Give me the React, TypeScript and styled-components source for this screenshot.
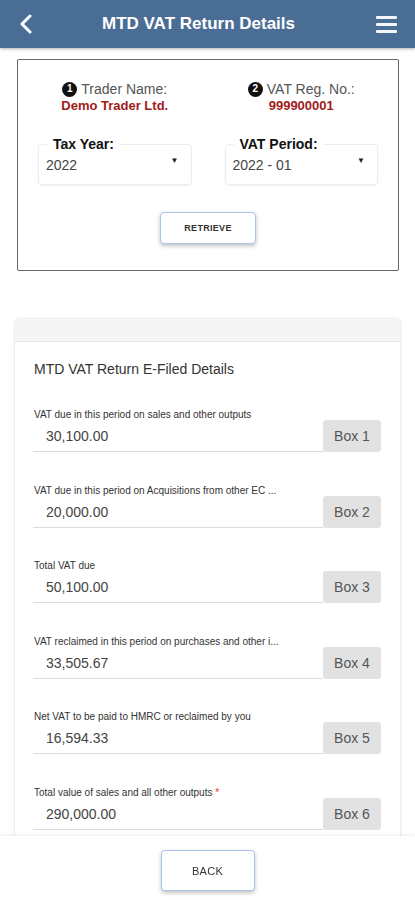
import React from 'react';
import styled, { createGlobalStyle } from 'styled-components';

const GlobalStyle = createGlobalStyle`
  body {
    margin: 0;
    background: #ffffff;
    font-family: "Liberation Sans", Arial, sans-serif;
    color: #333;
  }
`;

const Page = styled.div`
  min-height: 100vh;
`;

const Header = styled.header`
  height: 48px;
  background: #4a6d95;
  display: grid;
  grid-template-columns: 52px 1fr 57px;
  align-items: center;
  color: #fff;
  box-shadow: 0 1px 3px rgba(0, 0, 0, 0.3);
`;

const Title = styled.h1`
  margin: 0;
  padding-right: 13px;
  text-align: center;
  font-size: 17px;
  font-weight: 700;
`;

const IconBtn = styled.div`
  display: flex;
  align-items: center;
  justify-content: center;
  height: 48px;
`;

const SearchCard = styled.section`
  margin: 11px 16px 0 17px;
  border: 1px solid #666;
  border-radius: 2px;
  padding: 21px 0 26px;
`;

const Grid = styled.div`
  display: grid;
  grid-template-columns: 1fr 1fr;
  column-gap: 33px;
  padding: 0 20px;
`;

const Info = styled.div`
  text-align: center;
`;

const InfoLabel = styled.div`
  display: flex;
  align-items: center;
  justify-content: center;
  gap: 4px;
  font-size: 14px;
  color: #555;
  line-height: 16px;
`;

const Badge = styled.span`
  width: 15px;
  height: 15px;
  border-radius: 50%;
  background: #111;
  color: #fff;
  font-size: 10px;
  font-weight: 700;
  display: inline-flex;
  align-items: center;
  justify-content: center;
`;

const InfoValue = styled.div`
  font-size: 13px;
  font-weight: 700;
  color: #a21b1b;
  line-height: 17px;
`;

const SelectBox = styled.div`
  position: relative;
  margin-top: 30px;
  height: 41px;
  border: 1px solid #ececec;
  border-radius: 4px;
  box-shadow: 0 1px 2px rgba(0, 0, 0, 0.06);
  display: flex;
  align-items: center;
  justify-content: space-between;
  padding: 0 12px 0 7px;
  box-sizing: border-box;
  font-size: 14px;
  color: #444;
`;

const Legend = styled.span`
  position: absolute;
  top: -9px;
  left: 8px;
  padding: 0 6px;
  background: #fff;
  font-size: 14px;
  font-weight: 700;
  color: #111;
  line-height: 16px;
`;

const Caret = styled.span`
  font-size: 8px;
  color: #222;
  margin-top: -9px;
`;

const Actions = styled.div`
  display: flex;
  justify-content: center;
  margin-top: 27px;
`;

const OutlineButton = styled.button<{ $w: number; $h: number; $size: number; $bold?: boolean }>`
  width: ${(p) => p.$w}px;
  height: ${(p) => p.$h}px;
  background: #fff;
  border: 1px solid #a9c5ea;
  border-radius: 4px;
  box-shadow: 0 2px 4px rgba(0, 0, 0, 0.25);
  font-family: "Liberation Sans", Arial, sans-serif;
  font-size: ${(p) => p.$size}px;
  font-weight: ${(p) => (p.$bold ? 700 : 400)};
  color: #333;
  letter-spacing: 0.3px;
  padding: 0;
`;

const ReturnCard = styled.section`
  margin: 48px 15px 0 15px;
  border-radius: 4px;
  box-shadow: 0 0 3px rgba(0, 0, 0, 0.18);
  background: #fff;
  overflow: hidden;
`;

const CardTop = styled.div`
  height: 22px;
  background: #f5f5f5;
  border-bottom: 1px solid #e6e6e6;
`;

const CardBody = styled.div`
  padding: 19px 19px 30px 18px;
`;

const CardTitle = styled.h2`
  margin: 0 0 32px 1px;
  font-size: 14px;
  font-weight: 400;
  line-height: 16px;
  color: #333;
`;

const Rows = styled.div`
  display: flex;
  flex-direction: column;
  gap: 32.6px;
`;

const FieldLabel = styled.div`
  font-size: 10px;
  line-height: 12px;
  color: #333;
  padding-left: 1px;
  white-space: nowrap;
`;

const Required = styled.span`
  color: #d33;
`;

const FieldRow = styled.div`
  display: flex;
  margin-top: -1px;
  height: 32px;
`;

const Value = styled.div`
  flex: 1;
  border-bottom: 1px solid #dcdcdc;
  font-size: 14px;
  line-height: 32px;
  padding-left: 13px;
  color: #444;
`;

const BoxTag = styled.div`
  width: 58px;
  background: #e2e2e2;
  border-radius: 3px;
  font-size: 14px;
  color: #555;
  display: flex;
  align-items: center;
  justify-content: center;
`;

const Footer = styled.footer`
  position: fixed;
  left: 0;
  right: 0;
  bottom: 0;
  height: 64px;
  background: #fff;
  box-shadow: 0 -1px 3px rgba(0, 0, 0, 0.08);
  display: flex;
  justify-content: center;
  padding-top: 14px;
  box-sizing: border-box;
`;

const rows = [
  { label: 'VAT due in this period on sales and other outputs', value: '30,100.00' },
  { label: 'VAT due in this period on Acquisitions from other EC ...', value: '20,000.00' },
  { label: 'Total VAT due', value: '50,100.00' },
  { label: 'VAT reclaimed in this period on purchases and other i...', value: '33,505.67' },
  { label: 'Net VAT to be paid to HMRC or reclaimed by you', value: '16,594.33' },
  { label: 'Total value of sales and all other outputs', value: '290,000.00', required: true },
];

export default function App() {
  return (
    <Page>
      <GlobalStyle />
      <Header>
        <IconBtn>
          <svg width="14" height="20" viewBox="0 0 14 20">
            <polyline points="11,2 3,10 11,18" fill="none" stroke="#fff" strokeWidth="3" strokeLinecap="round" strokeLinejoin="round" />
          </svg>
        </IconBtn>
        <Title>MTD VAT Return Details</Title>
        <IconBtn>
          <svg width="21" height="19" viewBox="0 0 21 19">
            <rect x="0" y="1" width="21" height="3" rx="1" fill="#f2f5f9" />
            <rect x="0" y="8" width="21" height="3" rx="1" fill="#f2f5f9" />
            <rect x="0" y="15" width="21" height="3" rx="1" fill="#f2f5f9" />
          </svg>
        </IconBtn>
      </Header>

      <SearchCard>
        <Grid>
          <Info>
            <InfoLabel><Badge>1</Badge>Trader Name:</InfoLabel>
            <InfoValue>Demo Trader Ltd.</InfoValue>
          </Info>
          <Info>
            <InfoLabel><Badge>2</Badge>VAT Reg. No.:</InfoLabel>
            <InfoValue>999900001</InfoValue>
          </Info>
          <SelectBox>
            <Legend>Tax Year:</Legend>
            <span>2022</span>
            <Caret>▼</Caret>
          </SelectBox>
          <SelectBox>
            <Legend>VAT Period:</Legend>
            <span>2022 - 01</span>
            <Caret>▼</Caret>
          </SelectBox>
        </Grid>
        <Actions>
          <OutlineButton $w={96} $h={32} $size={9} $bold>RETRIEVE</OutlineButton>
        </Actions>
      </SearchCard>

      <ReturnCard>
        <CardTop />
        <CardBody>
          <CardTitle>MTD VAT Return E-Filed Details</CardTitle>
          <Rows>
            {rows.map((r, i) => (
              <div key={i}>
                <FieldLabel>
                  {r.label}
                  {r.required && <Required> *</Required>}
                </FieldLabel>
                <FieldRow>
                  <Value>{r.value}</Value>
                  <BoxTag>Box {i + 1}</BoxTag>
                </FieldRow>
              </div>
            ))}
          </Rows>
        </CardBody>
      </ReturnCard>

      <Footer>
        <OutlineButton $w={94} $h={41} $size={11}>BACK</OutlineButton>
      </Footer>
    </Page>
  );
}
